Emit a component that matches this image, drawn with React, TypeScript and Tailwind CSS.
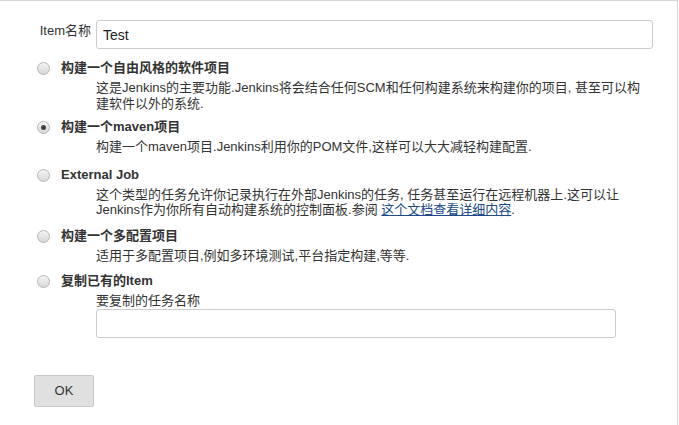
import React, { useState } from 'react';

const font = { fontFamily: '"Liberation Sans", Arial, "Noto Sans CJK SC", sans-serif' };

type Option = {
  id: string;
  title: string;
  gap: string;
  lines: React.ReactNode[];
};

const OPTIONS: Option[] = [
  {
    id: 'free',
    title: '构建一个自由风格的软件项目',
    gap: 'mt-0',
    lines: [
      '这是Jenkins的主要功能.Jenkins将会结合任何SCM和任何构建系统来构建你的项目, 甚至可以构',
      '建软件以外的系统.',
    ],
  },
  {
    id: 'maven',
    title: '构建一个maven项目',
    gap: 'mt-[8px]',
    lines: ['构建一个maven项目.Jenkins利用你的POM文件,这样可以大大减轻构建配置.'],
  },
  {
    id: 'external',
    title: 'External Job',
    gap: 'mt-[12px]',
    lines: [
      '这个类型的任务允许你记录执行在外部Jenkins的任务, 任务甚至运行在远程机器上.这可以让',
      <>
        Jenkins作为你所有自动构建系统的控制面板.参阅{' '}
        <a href="#" className="text-[#204a87] underline">
          这个文档查看详细内容
        </a>
        .
      </>,
    ],
  },
  {
    id: 'matrix',
    title: '构建一个多配置项目',
    gap: 'mt-[10px]',
    lines: ['适用于多配置项目,例如多环境测试,平台指定构建,等等.'],
  },
];

const Radio: React.FC<{ checked: boolean; onClick: () => void }> = ({ checked, onClick }) => (
  <button
    onClick={onClick}
    className="mt-[2px] w-[13px] h-[13px] rounded-full border border-[#b5b5b5] bg-gradient-to-b from-[#f4f4f4] to-[#d8d8d8] flex items-center justify-center shrink-0"
  >
    {checked && <span className="w-[5px] h-[5px] rounded-full bg-[#444]" />}
  </button>
);

export default function App() {
  const [selected, setSelected] = useState('maven');
  const [name, setName] = useState('Test');

  return (
    <div style={font} className="w-[678px] h-[425px] bg-white border-t border-r border-[#d6d6d6] text-[13px] text-[#333]">
      <div className="flex items-start pt-[19px]">
        <label className="w-[91px] text-right pt-[3px] leading-[16px]">Item名称</label>
        <input
          value={name}
          onChange={(e) => setName(e.target.value)}
          className="ml-[5px] w-[557px] h-[29px] border border-[#cccccc] rounded-[3px] px-[6px] text-[14px] text-[#222] outline-none"
        />
      </div>

      <div className="pl-[37px] pt-[11px] flex flex-col">
        {OPTIONS.map((o) => (
          <div key={o.id} className={o.gap}>
            <div className="flex items-start gap-[11px] leading-[16px]">
              <Radio checked={selected === o.id} onClick={() => setSelected(o.id)} />
              <span className="font-bold">{o.title}</span>
            </div>
            <div className="pl-[59px] mt-[4px] leading-[15.5px]">
              {o.lines.map((l, i) => (
                <div key={i} className="whitespace-nowrap">
                  {l}
                </div>
              ))}
            </div>
          </div>
        ))}

        <div className="mt-[10px]">
          <div className="flex items-start gap-[11px] leading-[16px]">
            <Radio checked={selected === 'copy'} onClick={() => setSelected('copy')} />
            <span className="font-bold">复制已有的Item</span>
          </div>
          <div className="pl-[59px] mt-[4px] leading-[15.5px]">
            <div>要复制的任务名称</div>
            <input className="w-[520px] h-[29px] border border-[#cccccc] rounded-[3px] px-[6px] text-[14px] outline-none" />
          </div>
        </div>
      </div>

      <div className="pl-[34px] pt-[37px]">
        <button className="w-[60px] h-[32px] bg-[#e0e0e0] border border-[#c8c8c8] rounded-[2px] text-[13px] text-[#333]">
          OK
        </button>
      </div>
    </div>
  );
}
